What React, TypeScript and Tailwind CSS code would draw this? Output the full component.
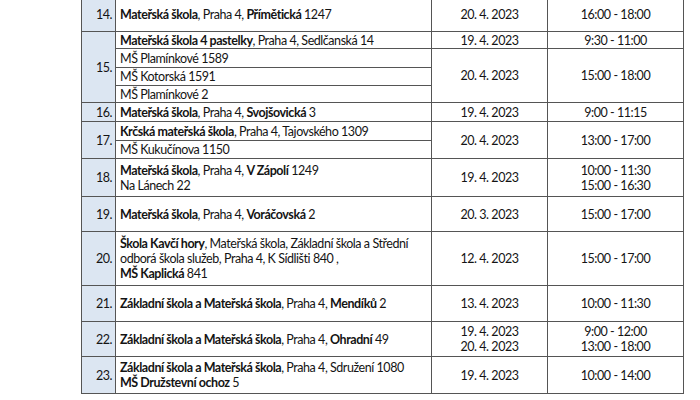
import React from "react";

const B = ({ children }: { children: React.ReactNode }) => <b className="font-bold">{children}</b>;

const td = "border border-[#555555] px-[4px] py-0 align-middle whitespace-nowrap";
const num = `${td} bg-[#dce6f2] text-right pr-[3px]`;
const name = `${td} text-left`;
const mid = `${td} text-center`;

export default function App() {
  return (
    <div className="w-[700px] h-[400px] overflow-hidden bg-white" style={{ fontFamily: "Lato, 'Open Sans', sans-serif" }}>
      <table className="ml-[81px] mt-[-4px] border-collapse table-fixed text-[12.5px] tracking-[-0.45px] leading-[15px] text-[#141414] w-[602px]">
        <colgroup>
          <col className="w-[34px]" />
          <col className="w-[316px]" />
          <col className="w-[116px]" />
          <col className="w-[136px]" />
        </colgroup>
        <tbody>
          <tr className="h-[35px]">
            <td className={num}>14.</td>
            <td className={name}><B>Mateřská škola</B>, Praha 4, <B>Přímětická</B> 1247</td>
            <td className={mid}>20. 4. 2023</td>
            <td className={mid}>16:00 - 18:00</td>
          </tr>
          <tr className="h-[17px]">
            <td className={num} rowSpan={4}>15.</td>
            <td className={name}><B>Mateřská škola 4 pastelky</B>, Praha 4, Sedlčanská 14</td>
            <td className={mid}>19. 4. 2023</td>
            <td className={mid}>9:30 - 11:00</td>
          </tr>
          <tr className="h-[19px]">
            <td className={name}>MŠ Plamínkové 1589</td>
            <td className={mid} rowSpan={3}>20. 4. 2023</td>
            <td className={mid} rowSpan={3}>15:00 - 18:00</td>
          </tr>
          <tr className="h-[18px]">
            <td className={name}>MŠ Kotorská 1591</td>
          </tr>
          <tr className="h-[17px]">
            <td className={name}>MŠ Plamínkové 2</td>
          </tr>
          <tr className="h-[19px]">
            <td className={num}>16.</td>
            <td className={name}><B>Mateřská škola</B>, Praha 4, <B>Svojšovická</B> 3</td>
            <td className={mid}>19. 4. 2023</td>
            <td className={mid}>9:00 - 11:15</td>
          </tr>
          <tr className="h-[19px]">
            <td className={num} rowSpan={2}>17.</td>
            <td className={name}><B>Krčská mateřská škola</B>, Praha 4, Tajovského 1309</td>
            <td className={mid} rowSpan={2}>20. 4. 2023</td>
            <td className={mid} rowSpan={2}>13:00 - 17:00</td>
          </tr>
          <tr className="h-[18px]">
            <td className={name}>MŠ Kukučínova 1150</td>
          </tr>
          <tr className="h-[38px]">
            <td className={num}>18.</td>
            <td className={name}><B>Mateřská škola</B>, Praha 4, <B>V Zápolí</B> 1249<br />Na Lánech 22</td>
            <td className={mid}>19. 4. 2023</td>
            <td className={mid}>10:00 - 11:30<br />15:00 - 16:30</td>
          </tr>
          <tr className="h-[35px]">
            <td className={num}>19.</td>
            <td className={name}><B>Mateřská škola</B>, Praha 4, <B>Voráčovská</B> 2</td>
            <td className={mid}>20. 3. 2023</td>
            <td className={mid}>15:00 - 17:00</td>
          </tr>
          <tr className="h-[54px]">
            <td className={num}>20.</td>
            <td className={name}><B>Škola Kavčí hory</B>, Mateřská škola, Základní škola a Střední<br />odborá škola služeb, Praha 4, K Sídlišti 840 ,<br /><B>MŠ Kaplická</B> 841</td>
            <td className={mid}>12. 4. 2023</td>
            <td className={mid}>15:00 - 17:00</td>
          </tr>
          <tr className="h-[36px]">
            <td className={num}>21.</td>
            <td className={name}><B>Základní škola a Mateřská škola</B>, Praha 4, <B>Mendíků</B> 2</td>
            <td className={mid}>13. 4. 2023</td>
            <td className={mid}>10:00 - 11:30</td>
          </tr>
          <tr className="h-[35px]">
            <td className={num}>22.</td>
            <td className={name}><B>Základní škola a Mateřská škola</B>, Praha 4, <B>Ohradní</B> 49</td>
            <td className={mid}>19. 4. 2023<br />20. 4. 2023</td>
            <td className={mid}>9:00 - 12:00<br />13:00 - 18:00</td>
          </tr>
          <tr className="h-[37px]">
            <td className={num}>23.</td>
            <td className={name}><B>Základní škola a Mateřská škola</B>, Praha 4, Sdružení 1080<br /><B>MŠ Družstevní ochoz</B> 5</td>
            <td className={mid}>19. 4. 2023</td>
            <td className={mid}>10:00 - 14:00</td>
          </tr>
        </tbody>
      </table>
    </div>
  );
}
